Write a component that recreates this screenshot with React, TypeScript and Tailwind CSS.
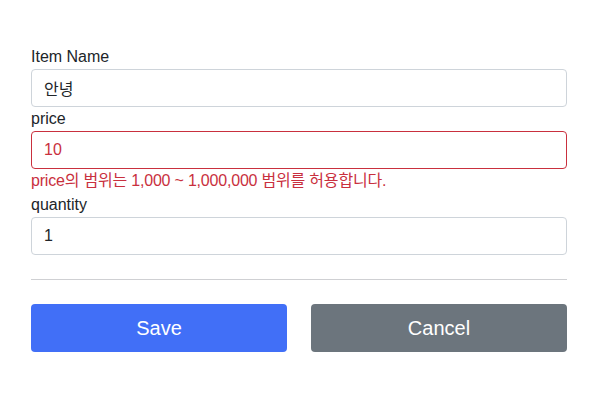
import React from "react";

export default function App() {
  const font = { fontFamily: '"Liberation Sans", "Noto Sans CJK KR", sans-serif' };
  return (
    <div className="w-[605px] h-[402px] bg-white text-[#212529]" style={font}>
      <div className="ml-[31px] w-[536px] pt-[45px]">
        <div>
          <label className="block text-[16px] leading-[24px]">Item Name</label>
          <input
            className="block w-full h-[38px] px-3 border border-[#ced4da] rounded-[4px] text-[16px] text-[#212529] outline-none"
            defaultValue="안녕"
          />
        </div>
        <div>
          <label className="block text-[16px] leading-[24px]">price</label>
          <input
            className="block w-full h-[38px] px-3 border border-[#c9303e] rounded-[4px] text-[16px] text-[#c9303e] outline-none"
            defaultValue="10"
          />
          <div className="text-[16px] leading-[24px] text-[#c9303e] tracking-[-0.2px]">
            price의 범위는 1,000 ~ 1,000,000 범위를 허용합니다.
          </div>
        </div>
        <div>
          <label className="block text-[16px] leading-[24px]">quantity</label>
          <input
            className="block w-full h-[38px] px-3 border border-[#ced4da] rounded-[4px] text-[16px] text-[#212529] outline-none"
            defaultValue="1"
          />
        </div>
        <hr className="my-6 border-0 border-t border-[#cfd0d3]" />
        <div className="grid grid-cols-2 gap-6">
          <button className="h-[48px] rounded-[4px] bg-[#416ff7] text-white text-[20px]">Save</button>
          <button className="h-[48px] rounded-[4px] bg-[#6c757d] text-white text-[20px]">Cancel</button>
        </div>
      </div>
    </div>
  );
}
